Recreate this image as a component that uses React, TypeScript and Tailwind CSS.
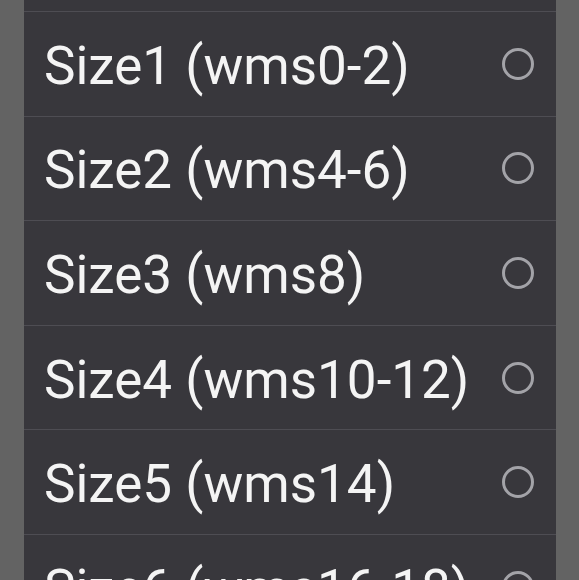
import React from "react";

const items = [
  "Size1 (wms0-2)",
  "Size2 (wms4-6)",
  "Size3 (wms8)",
  "Size4 (wms10-12)",
  "Size5 (wms14)",
  "Size6 (wms16-18)",
];

export default function App() {
  return (
    <div className="w-[579px] h-[580px] overflow-hidden bg-[#636363] px-[24px]">
      <div className="w-[532px] h-full bg-[#38373c]" style={{ fontFamily: "Roboto, 'Noto Sans', sans-serif" }}>
        <div className="h-[11px]" />
        {items.map((t) => (
          <div
            key={t}
            className="h-[104.6px] border-t border-[#4e4d53] flex items-center justify-between pl-[20px] pr-[21px]"
          >
            <span className="mt-[5px] text-[#f4f4f4] text-[53px] leading-none whitespace-nowrap">{t}</span>
            <svg width="34" height="34" viewBox="0 0 34 34" className="shrink-0">
              <circle cx="17" cy="17" r="14.5" fill="none" stroke="#a3a3a8" strokeWidth="3" />
            </svg>
          </div>
        ))}
      </div>
    </div>
  );
}
